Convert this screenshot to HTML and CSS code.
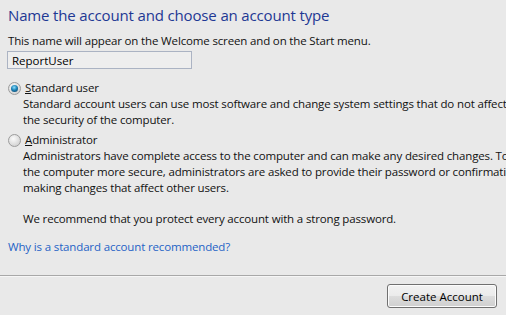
FILE: index.html
```html
<!DOCTYPE html>
<html lang="en">
<head>
    <meta charset="UTF-8">
    <title>Create New Account</title>
    <link rel="stylesheet" href="styles.css">
</head>
<body>
    <div class="pagina">
        <h1 class="titulo">Name the account and choose an account type</h1>
        <p class="texto">This name will appear on the Welcome screen and on the Start menu.</p>
        <input class="caja" type="text" value="ReportUser">

        <div class="opcion">
            <label class="etiqueta"><span class="radio marcado"></span><span><u>S</u>tandard user</span></label>
            <p class="descripcion">Standard account users can use most software and change system settings that do not affect<br>the security of the computer.</p>
        </div>

        <div class="opcion segunda">
            <label class="etiqueta"><span class="radio"></span><span><u>A</u>dministrator</span></label>
            <p class="descripcion">Administrators have complete access to the computer and can make any desired changes. To help make<br>the computer more secure, administrators are asked to provide their password or confirmation before<br>making changes that affect other users.</p>
            <p class="descripcion aviso">We recommend that you protect every account with a strong password.</p>
        </div>

        <a class="enlace" href="#">Why is a standard account recommended?</a>
    </div>

    <div class="pie">
        <button class="boton">Create Account</button>
    </div>
</body>
</html>
```

FILE: styles.css
```css
html{
    background: #e9e9e9;
}

body{
    margin: 0;
    width: 506px;
    height: 315px;
    overflow: hidden;
    font-family: 'Open Sans', 'Noto Sans', sans-serif;
    font-size: 11.5px;
    letter-spacing: -0.15px;
    color: #111;
    white-space: nowrap;
}

.pagina{
    padding: 4px 8px 0 8px;
    height: 271px;
}

.titulo{
    margin: 0;
    font-size: 15px;
    font-weight: normal;
    line-height: 22px;
    color: #1e3894;
}

.texto{
    margin: 7px 0 2px 0;
    line-height: 16px;
}

.caja{
    display: block;
    box-sizing: border-box;
    width: 185px;
    height: 18px;
    margin: 0 0 0 -1px;
    padding: 0 0 0 4px;
    border: 1px solid #abb3c3;
    background: #eeeeee;
    font: inherit;
    color: #000;
}

.opcion{
    margin-top: 11px;
}

.opcion.segunda{
    margin-top: 4px;
}

.etiqueta{
    display: flex;
    align-items: center;
    gap: 4px;
    line-height: 16px;
}

.radio{
    width: 11px;
    height: 11px;
    border: 1px solid #9c9c9c;
    border-radius: 50%;
    background: radial-gradient(circle at 40% 35%, #fbfbfb, #d4d4d4 75%);
    display: flex;
    align-items: center;
    justify-content: center;
}

.radio.marcado::after{
    content: "";
    width: 7px;
    height: 7px;
    border-radius: 50%;
    background: radial-gradient(circle at 45% 35%, #8fe0ff, #1d84b8 45%, #0c3557 100%);
}

.descripcion{
    margin: 0 0 0 15px;
    line-height: 16px;
}

.aviso{
    margin-top: 15px;
}

.enlace{
    display: inline-block;
    margin-top: 12px;
    color: #1f63c6;
    text-decoration: none;
    line-height: 16px;
}

.pie{
    border-top: 1px solid #a8a8a8;
    box-shadow: inset 0 1px 0 #f6f6f6;
    display: flex;
    justify-content: flex-end;
    padding: 8px 9px 0 0;
}

.boton{
    width: 110px;
    height: 24px;
    border: 1px solid #707070;
    border-radius: 3px;
    background: linear-gradient(#f2f2f2, #ebebeb 50%, #dddddd 50%, #cfcfcf);
    box-shadow: inset 0 0 0 1px #fcfcfc;
    font: inherit;
    color: #000;
    padding: 0;
}
```
